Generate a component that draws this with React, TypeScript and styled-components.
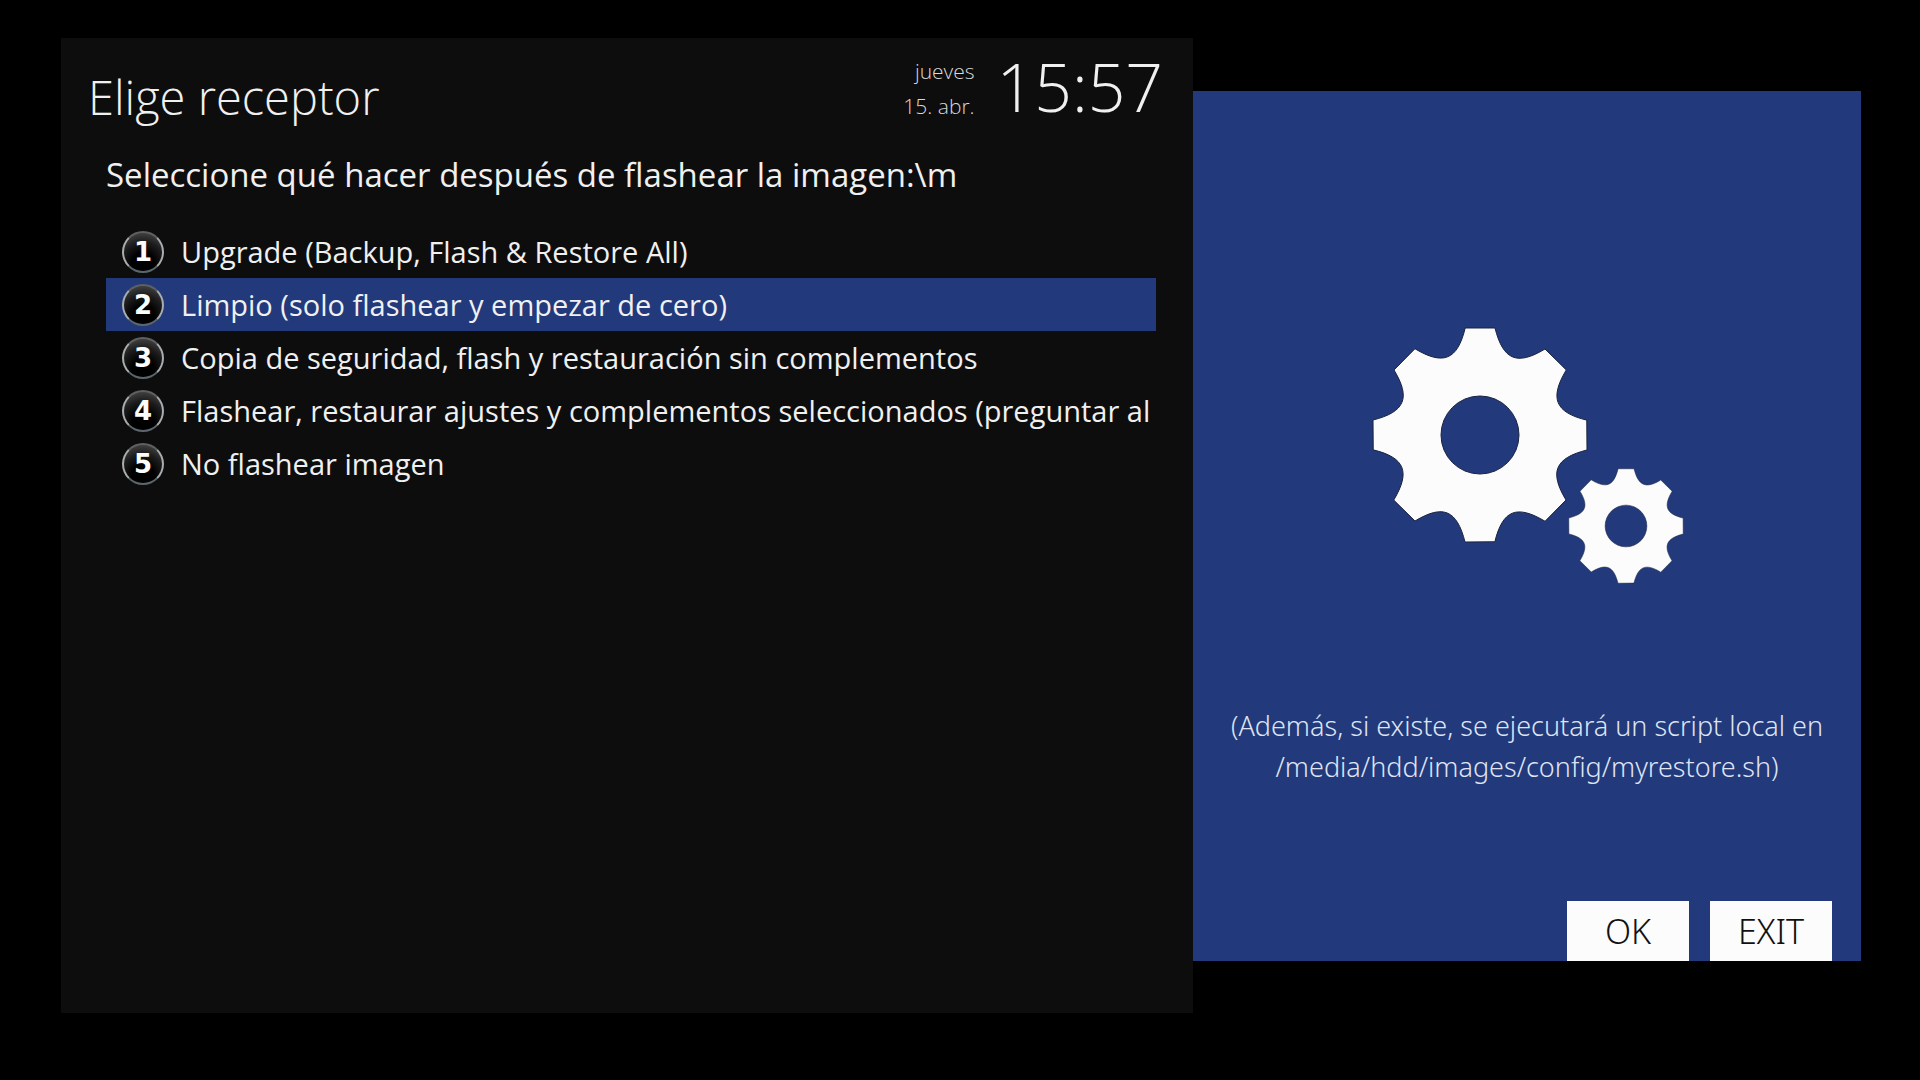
import React, { useState } from "react";
import styled, { createGlobalStyle } from "styled-components";

const color = {
  panel: "#0d0d0d",
  accent: "#22397b",
  text: "#f0f0f0",
  white: "#fcfcfc",
};

const GlobalStyle = createGlobalStyle`
  *, *::before, *::after { box-sizing: border-box; }
  body {
    margin: 0;
    background: #000;
    color: ${color.text};
    font-family: "Open Sans", "Noto Sans", sans-serif;
  }
  h1, h2, p, ol { margin: 0; padding: 0; font-weight: inherit; }
  button { font-family: inherit; border: 0; cursor: pointer; }
`;

const Screen = styled.div`
  display: grid;
  grid-template-columns: minmax(0, 1132fr) minmax(0, 668fr);
  min-height: 100vh;
  padding: 38px 59px 67px 61px;
`;

const MenuPanel = styled.main`
  background: ${color.panel};
`;

const Header = styled.header`
  display: flex;
  justify-content: space-between;
  height: 104px;
  padding: 0 30px 0 27px;
`;

const Title = styled.h1`
  padding-top: 23px;
  font-size: 47px;
  line-height: 72px;
  font-weight: 300;
`;

const DateTime = styled.div`
  display: flex;
  gap: 22px;
  font-weight: 300;
`;

const DateLines = styled.div`
  padding-top: 16px;
  font-size: 21px;
  line-height: 35px;
  text-align: right;
  color: #d8d8d8;
`;

const Clock = styled.time`
  font-size: 66px;
  line-height: 96px;
`;

const Question = styled.h2`
  padding: 9px 45px 0;
  font-size: 33px;
  line-height: 48px;
`;

const Options = styled.ol`
  list-style: none;
  margin: 26px 37px 0 45px;
`;

const OptionButton = styled.button<{ $selected: boolean }>`
  display: flex;
  align-items: center;
  gap: 17px;
  width: 100%;
  height: 53px;
  padding: 0 0 0 16px;
  overflow: hidden;
  background: ${(p) => (p.$selected ? color.accent : "transparent")};
  color: ${color.text};
  font-size: 29px;
  line-height: 40px;
  text-align: left;
  white-space: nowrap;
`;

const Badge = styled.span`
  display: grid;
  place-items: center;
  flex: none;
  width: 42px;
  height: 42px;
  border: 2px solid #a9adaf;
  border-top-color: #5e6062;
  border-bottom-color: #5a666c;
  border-radius: 50%;
  background: radial-gradient(circle at 50% 80%, #000 30%, #1c1c1c 60%, #555 100%);
  color: ${color.white};
  font-family: "DejaVu Sans", sans-serif;
  font-size: 26px;
  line-height: 36px;
  font-weight: 700;
`;

const InfoPanel = styled.aside`
  display: flex;
  flex-direction: column;
  align-items: center;
  margin: 53px 0 52px;
  padding: 236px 29px 0;
  background: ${color.accent};
`;

const Gears = styled.svg`
  display: block;
  width: 314px;
  height: 257px;
  flex: none;
`;

const Note = styled.p`
  padding-top: 121px;
  font-family: "Noto Sans", "Open Sans", sans-serif;
  font-size: 27px;
  line-height: 41px;
  font-weight: 300;
  text-align: center;
  color: #dfe4f2;
`;

const Actions = styled.div`
  display: flex;
  gap: 21px;
  align-self: flex-end;
  margin-top: auto;
`;

const ActionButton = styled.button`
  width: 122px;
  height: 60px;
  padding: 0;
  background: ${color.white};
  color: #111;
  font-family: "Noto Sans", "Open Sans", sans-serif;
  font-size: 34px;
  line-height: 60px;
  font-weight: 300;
`;

// One valley, starting at the right corner of the top tooth.
const VALLEY = [[23, -75], [37, -69], [65, -86]];

function rotate([x, y]: number[], deg: number) {
  const a = (deg * Math.PI) / 180;
  return `${(x * Math.cos(a) - y * Math.sin(a)).toFixed(2)} ${(x * Math.sin(a) + y * Math.cos(a)).toFixed(2)}`;
}

// Eight flat teeth joined by rounded valleys, with a round hole in the middle.
function gearPath() {
  let d = "M-15 -107";
  for (let i = 0; i < 8; i++) {
    const turn = i * 45;
    d += ` L${rotate([15, -107], turn)} C${VALLEY.map((p) => rotate(p, turn)).join(" ")}`;
  }
  return d + " Z M-39 0 A39 39 0 1 0 39 0 A39 39 0 1 0 -39 0 Z";
}

const GEAR = gearPath();

const options = [
  "Upgrade (Backup, Flash & Restore All)",
  "Limpio (solo flashear y empezar de cero)",
  "Copia de seguridad, flash y restauración sin complementos",
  "Flashear, restaurar ajustes y complementos seleccionados (preguntar al",
  "No flashear imagen",
];

export default function App() {
  const [selected, setSelected] = useState(1);
  return (
    <>
      <GlobalStyle />
      <Screen>
        <MenuPanel>
          <Header>
            <Title>Elige receptor</Title>
            <DateTime>
              <DateLines>
                <div>jueves</div>
                <div>15. abr.</div>
              </DateLines>
              <Clock>15:57</Clock>
            </DateTime>
          </Header>
          <Question>Seleccione qué hacer después de flashear la imagen:\m</Question>
          <Options>
            {options.map((label, i) => (
              <li key={label}>
                <OptionButton $selected={i === selected} onClick={() => setSelected(i)}>
                  <Badge>{i + 1}</Badge>
                  <span>{label}</span>
                </OptionButton>
              </li>
            ))}
          </Options>
        </MenuPanel>
        <InfoPanel>
          <Gears viewBox="-110 -108 314 257" aria-hidden="true">
            <g fill={color.white} fillRule="evenodd" stroke="#1b2340" strokeWidth="1">
              <path d={GEAR} />
              <path d={GEAR} transform="translate(146 91) scale(0.535)" />
            </g>
          </Gears>
          <Note>
            (Además, si existe, se ejecutará un script local en
            <br />
            /media/hdd/images/config/myrestore.sh)
          </Note>
          <Actions>
            <ActionButton>OK</ActionButton>
            <ActionButton>EXIT</ActionButton>
          </Actions>
        </InfoPanel>
      </Screen>
    </>
  );
}
